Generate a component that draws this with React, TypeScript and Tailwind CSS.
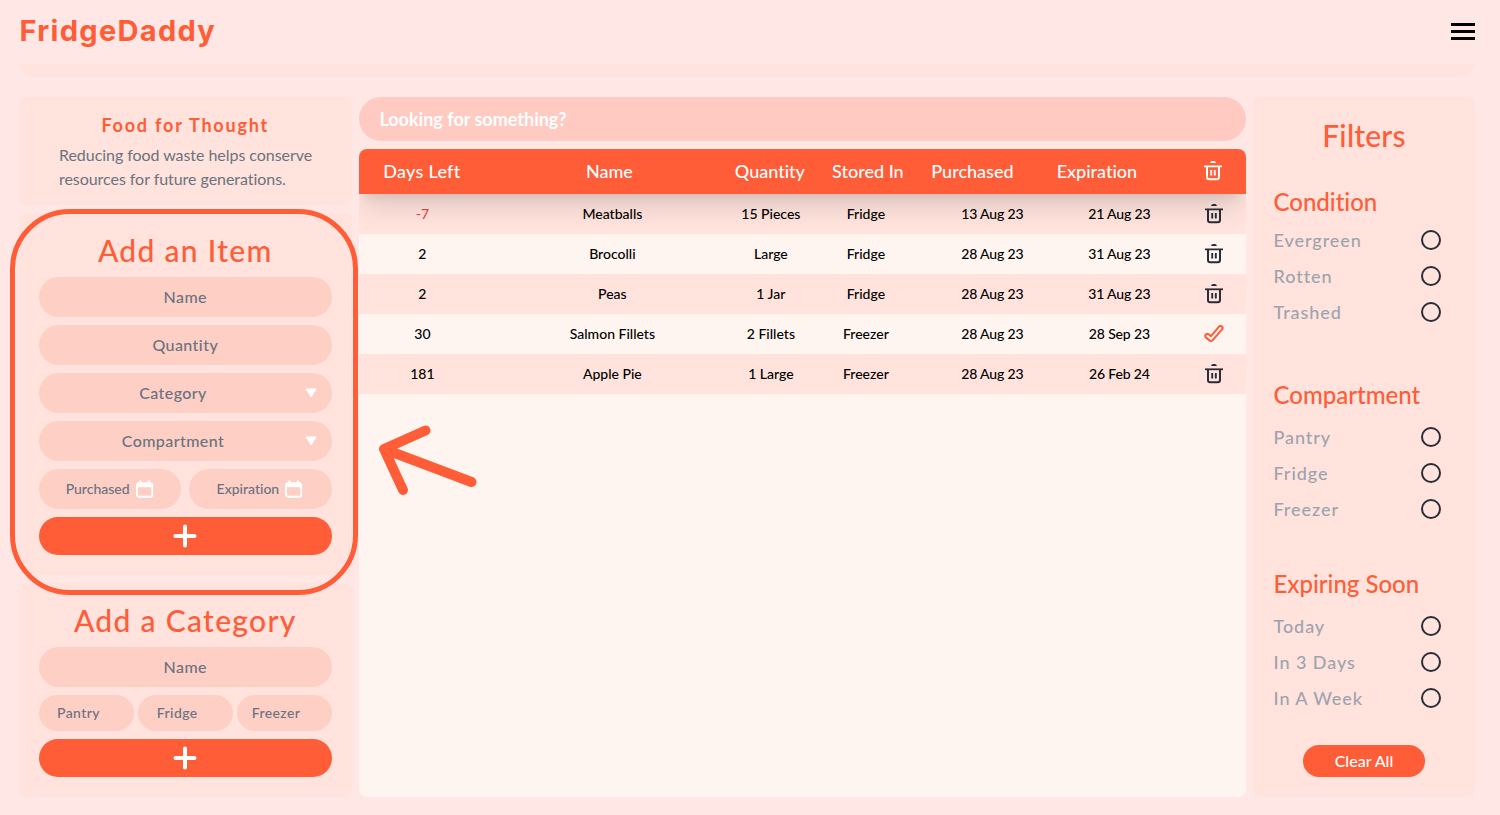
import { ReactNode } from "react";

const items = [
  ["-7", "Meatballs", "15 Pieces", "Fridge", "13 Aug 23", "21 Aug 23"],
  ["2", "Brocolli", "Large", "Fridge", "28 Aug 23", "31 Aug 23"],
  ["2", "Peas", "1 Jar", "Fridge", "28 Aug 23", "31 Aug 23"],
  ["30", "Salmon Fillets", "2 Fillets", "Freezer", "28 Aug 23", "28 Sep 23"],
  ["181", "Apple Pie", "1 Large", "Freezer", "28 Aug 23", "26 Feb 24"],
];

const filterGroups = [
  { title: "Condition", options: ["Evergreen", "Rotten", "Trashed"], place: "mt-[33px]", list: "mt-[4px]" },
  { title: "Compartment", options: ["Pantry", "Fridge", "Freezer"], place: "mt-[49px]", list: "mt-[8px]" },
  { title: "Expiring Soon", options: ["Today", "In 3 Days", "In A Week"], place: "mt-[41px]", list: "mt-[8px]" },
];

function Trash() {
  return (
    <svg width="18" height="20" viewBox="0 0 18 20" fill="none" stroke="currentColor" strokeWidth="2">
      <path d="M6 2Q6.600 0 8 0h2q1.400 0 2 2Z" fill="currentColor" stroke="none" />
      <path d="M0 5.300h18" strokeWidth="1.800" />
      <path d="M3 5.500V16q0 2.300 2.300 2.300h7.400Q15 18.300 15 16V5.500" />
      <path d="M7.200 9v5.500M10.800 9v5.500" strokeWidth="1.900" />
    </svg>
  );
}

function Check() {
  return (
    <svg className="mr-[1px]" width="20" height="18" viewBox="0 0 20 18" fill="none" stroke="currentColor" strokeWidth="2" strokeLinejoin="round">
      <path d="M1.300 10.200Q2.600 8 4.700 9.300L7 11.200 15 1.700q1.400-1.400 2.900-.3 1.400 1.200.3 2.800L9 14.900q-1.600 1.800-3.500.5L1.900 12.600q-1-1-.6-2.400Z" />
    </svg>
  );
}

function Calendar() {
  return (
    <svg width="18" height="18" viewBox="0 0 18 18" fill="none" stroke="#fff">
      <rect x="1" y="3.200" width="15.200" height="13.500" rx="2" strokeWidth="1.900" />
      <path d="M1 5.200h15.200" strokeWidth="4" />
      <path d="M4.400 1.200v2M12.800 1.200v2" strokeWidth="2" strokeLinecap="round" />
    </svg>
  );
}

function Plus() {
  return (
    <button className="flex h-[38px] w-full items-center justify-center rounded-full bg-[#ff5c38] pr-px">
      <svg width="24" height="24" viewBox="0 0 24 24" stroke="#fff" strokeWidth="4" strokeLinecap="round">
        <path d="M12 2.500v19M2.500 12h19" />
      </svg>
    </button>
  );
}

function Field({ children, select = false }: { children: ReactNode; select?: boolean }) {
  return (
    <div className="flex h-10 items-center rounded-full bg-[#fecfc5] px-[14px] tracking-[0.430px]">
      <span className={select ? "flex-1 pr-[12px] text-center" : "flex-1 text-center"}>{children}</span>
      {select && (
        <svg className="mr-[0.500px]" width="12" height="10" viewBox="0 0 12 10" fill="#fff" stroke="#fff" strokeLinejoin="round">
          <path d="M1 1h10L6 9Z" />
        </svg>
      )}
    </div>
  );
}

export default function App() {
  return (
    <div className="flex h-[815px] w-[1500px] flex-col overflow-hidden bg-[#ffe7e5] font-['Lato',sans-serif] text-black [font-variant-ligatures:none]">
      <header className="flex h-16 shrink-0 items-center justify-between pr-[25px] pl-[19.500px]">
        <h1 className="-mt-[2px] font-['Inter',sans-serif] text-[29px] leading-[40px] font-bold tracking-[1.300px] text-[#ff5c38]">FridgeDaddy</h1>
        <button className="-mt-px flex h-[17px] w-6 flex-col justify-between">
          <span className="h-[3px] bg-black" />
          <span className="h-[3px] bg-black" />
          <span className="h-[3px] bg-black" />
        </button>
      </header>
      <div className="mr-[25px] ml-[19px] flex h-[13px] shrink-0 flex-col justify-end overflow-hidden">
        <div className="h-10 shrink-0 rounded-2xl bg-[#ffe3dc]" />
      </div>

      <main className="mt-5 mr-[25px] ml-[19px] flex h-[700px] shrink-0">
        <div className="flex w-[332.500px] flex-col gap-2 text-base font-medium text-[#6b7280]">
          <section className="h-[108px] rounded-lg bg-[#ffe3dc] px-10 pt-[14px]">
            <h2 className="text-center text-lg leading-7 font-bold tracking-[1.800px] text-[#ff5c38]">Food for Thought</h2>
            <p className="mt-1 leading-6 font-normal tracking-[-0.050px] whitespace-nowrap">
              Reducing food waste helps conserve
              <br />
              resources for future generations.
            </p>
          </section>

          <section className="relative h-[362px] rounded-lg bg-[#ffe3dc] px-5 pt-[19px]">
            <div className="pointer-events-none absolute top-[-4px] left-[-9px] h-[386px] w-[348px] rounded-[60px] border-[5px] border-[#ff5c38]" />
            <h2 className="h-[45px] text-center text-[30px] leading-9 font-medium tracking-[1.300px] text-[#ff5c38]">Add an Item</h2>
            <div className="flex flex-col gap-2">
              <Field>Name</Field>
              <Field>Quantity</Field>
              <Field select>Category</Field>
              <Field select>Compartment</Field>
              <div className="grid grid-cols-2 gap-2 text-sm">
                {["Purchased", "Expiration"].map((label) => (
                  <div key={label} className="flex h-10 items-center justify-center gap-[6px] rounded-full bg-[#fecfc5] pr-px">
                    {label}
                    <Calendar />
                  </div>
                ))}
              </div>
              <Plus />
            </div>
          </section>

          <section className="h-[214px] rounded-lg bg-[#ffe3dc] px-5 pt-[19px]">
            <h2 className="h-[45px] text-center text-[30px] leading-9 font-medium tracking-[1.300px] text-[#ff5c38]">Add a Category</h2>
            <div className="flex flex-col gap-2">
              <Field>Name</Field>
              <div className="grid grid-cols-3 gap-1 text-sm tracking-[0.400px]">
                <div className="flex h-9 items-center rounded-full bg-[#fecfc5] pl-[18px]">Pantry</div>
                <div className="flex h-9 items-center rounded-full bg-[#fecfc5] pl-[19px]">Fridge</div>
                <div className="flex h-9 items-center rounded-full bg-[#fecfc5] pl-[15px]">Freezer</div>
              </div>
              <Plus />
            </div>
          </section>
        </div>

        <div className="ml-[7.900px] flex w-[886.200px] flex-col">
          <div className="flex h-11 items-center rounded-full bg-[#ffcac1] px-5 text-lg font-bold text-white">Looking for something?</div>
          <div className="mt-2 flex flex-1 flex-col overflow-hidden rounded-lg bg-[#fff5f0]">
            <div className="z-10 grid h-[45px] shrink-0 grid-cols-[125px_250px_71px_125px_84px_165px_68px] items-center bg-[#ff5c38] text-center text-lg font-medium text-white shadow-[0_20px_25px_-5px_rgba(0,0,0,0.1),0_8px_10px_-6px_rgba(0,0,0,0.1)]">
              <span className="pb-px tracking-[0.300px]">Days Left</span>
              <span className="pb-px">Name</span>
              <span className="pb-px">Quantity</span>
              <span className="pb-px">Stored In</span>
              <span className="pb-px">Purchased</span>
              <span className="pb-px">Expiration</span>
              <span className="flex justify-center pb-[2px]"><Trash /></span>
            </div>
            {items.map((item, i) => (
              <div
                key={i}
                className={`grid h-10 shrink-0 grid-cols-[126px_254px_63px_127px_126px_128px_62px] items-center text-center text-sm font-medium ${i % 2 ? "" : "bg-[#ffe3dc]"}`}
              >
                {item.map((cell, j) => (
                  <span key={j} className={cell === "-7" ? "text-[#ef4444]" : j > 3 ? "tracking-[-0.150px]" : ""}>{cell}</span>
                ))}
                <span className={i === 3 ? "flex justify-center text-[#ff5c38]" : "flex justify-center text-[#292d38]"}>
                  {i === 3 ? <Check /> : <Trash />}
                </span>
              </div>
            ))}
            <svg className="mt-[30px] ml-[19px]" width="100" height="74" viewBox="0 0 100 74" fill="none" stroke="#ff5c38" strokeWidth="10" strokeLinecap="round" strokeLinejoin="round">
              <path d="M47.500 6.500 6 25 25 66M6 25 93.500 58" />
            </svg>
          </div>
        </div>

        <aside className="ml-[7.400px] flex w-[222px] flex-col rounded-lg bg-[#ffe3dc] px-5 pt-5">
          <h2 className="text-center text-[30px] leading-9 font-medium tracking-[0.200px] text-[#ff5c38]">Filters</h2>
          {filterGroups.map(({ title, options, place, list }) => (
            <section key={title} className={place}>
              <h3 className="pl-[0.500px] text-2xl leading-8 font-medium text-[#ff5c38]">{title}</h3>
              <ul className={list}>
                {options.map((option) => (
                  <li key={option} className="flex h-9 items-center justify-between pr-[14px] pl-[0.500px] text-lg font-medium tracking-[0.950px] text-[#9ca3af]">
                    {option}
                    <span className="size-5 rounded-full border-2 border-[#292d38]" />
                  </li>
                ))}
              </ul>
            </section>
          ))}
          <button className="mt-[29px] h-8 w-[122px] shrink-0 self-center rounded-full bg-[#ff5c38] font-medium text-white">Clear All</button>
        </aside>
      </main>
    </div>
  );
}
